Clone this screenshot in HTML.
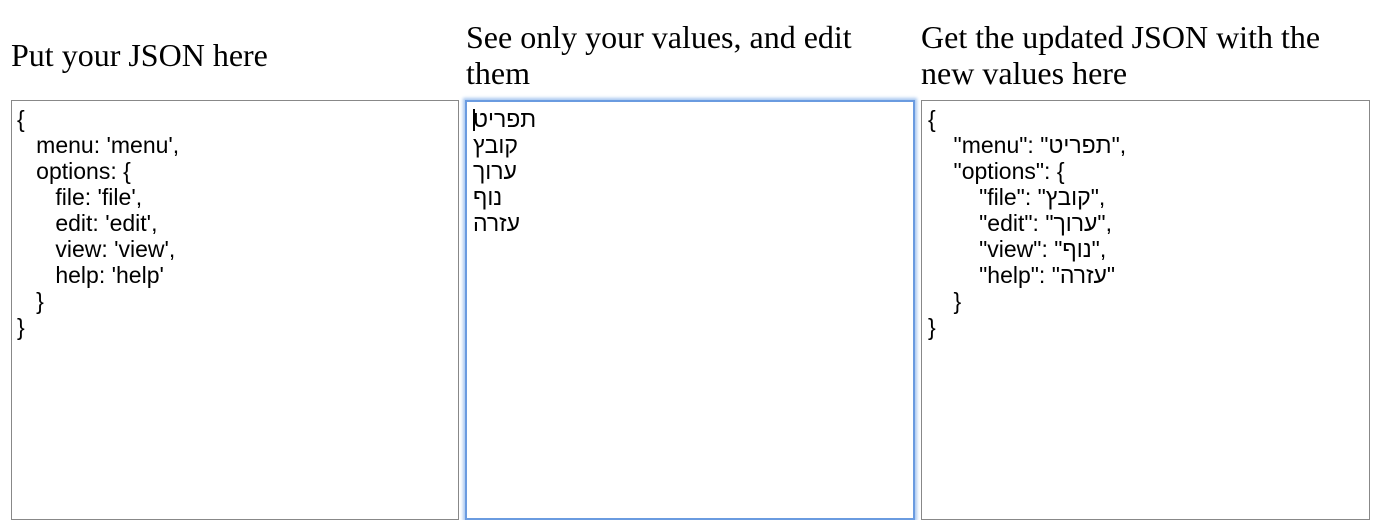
<!DOCTYPE html>
<html><head><meta charset="utf-8"><style>
body{margin:0;width:1384px;height:496px;overflow:hidden;background:#fff;position:relative;font-family:"Liberation Sans",sans-serif}
.h{position:absolute;font-family:"Liberation Serif",serif;font-size:32px;line-height:36px;color:#000;white-space:nowrap}
.box{position:absolute;top:100px;height:420px;border:1px solid #888;box-sizing:border-box;background:#fff}
.t{position:absolute;font-size:23px;line-height:26px;color:#000;white-space:pre;margin:0;font-family:"Liberation Sans","DejaVu Sans",sans-serif}
</style></head><body>
<div class="h" style="left:11px;top:37px">Put your JSON here</div>
<div class="h" style="left:466px;top:19px">See only your values, and edit<br>them</div>
<div class="h" style="left:921px;top:19px">Get the updated JSON with the<br>new values here</div>
<div class="box" style="left:11px;width:448px"></div>
<div class="box" style="left:465px;width:450px;border:2px solid #6a9be0;box-shadow:0 0 3px 2px #a9c8f0"></div>
<div class="box" style="left:921px;width:449px"></div>
<pre class="t" style="left:17px;top:106px">{
   menu: 'menu',
   options: {
      file: 'file',
      edit: 'edit',
      view: 'view',
      help: 'help'
   }
}</pre>
<pre class="t" style="left:473px;top:106px">תפריט
קובץ
ערוך
נוף
עזרה</pre>
<div style="position:absolute;left:473px;top:109px;width:2px;height:22px;background:#000"></div>
<pre class="t" style="left:928px;top:106px">{
    "menu": "תפריט",
    "options": {
        "file": "קובץ",
        "edit": "ערוך",
        "view": "נוף",
        "help": "עזרה"
    }
}</pre>
</body></html>
